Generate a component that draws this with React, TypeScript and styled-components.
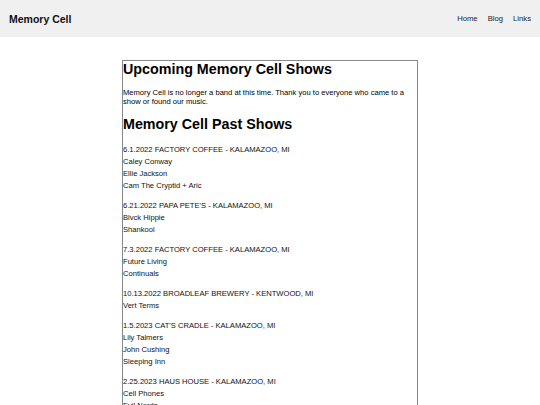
import React from 'react'
import styled, { createGlobalStyle } from 'styled-components'

interface Show {
    title: string
    acts: string[]
}

const shows: Show[] = [
    { title: '6.1.2022 FACTORY COFFEE - KALAMAZOO, MI', acts: ['Caley Conway', 'Ellie Jackson', 'Cam The Cryptid + Aric'] },
    { title: "6.21.2022 PAPA PETE'S - KALAMAZOO, MI", acts: ['Blvck Hippie', 'Shankool'] },
    { title: '7.3.2022 FACTORY COFFEE - KALAMAZOO, MI', acts: ['Future Living', 'Continuals'] },
    { title: '10.13.2022 BROADLEAF BREWERY - KENTWOOD, MI', acts: ['Vert Terms'] },
    { title: "1.5.2023 CAT'S CRADLE - KALAMAZOO, MI", acts: ['Lily Talmers', 'John Cushing', 'Sleeping Inn'] },
    { title: '2.25.2023 HAUS HOUSE - KALAMAZOO, MI', acts: ['Cell Phones', 'Evil Nerds'] },
]

const GlobalStyle = createGlobalStyle`
    body {
        margin: 0;
        background: #fff;
        color: #000;
        font-family: "Liberation Sans", Arial, sans-serif;
    }
`

const App: React.FC = () => {
    return (
        <>
            <GlobalStyle />
            <Header>
                <Brand>Memory Cell</Brand>
                <Nav>
                    <NavLink>Home</NavLink>
                    <NavLink>Blog</NavLink>
                    <NavLink>Links</NavLink>
                </Nav>
            </Header>
            <Content>
                <Title>Upcoming Memory Cell Shows</Title>
                <Text>Memory Cell is no longer a band at this time. Thank you to everyone who came to a show or found our music.</Text>
                <Title>Memory Cell Past Shows</Title>
                <ShowList>
                    {shows.map(show => (
                        <ShowBlock key={show.title}>
                            <Line>{show.title}</Line>
                            {show.acts.map(act => <Line key={act}>{act}</Line>)}
                        </ShowBlock>
                    ))}
                </ShowList>
            </Content>
        </>
    )
}

const Header = styled.header`
    display: flex;
    height: 37px;
    padding: 0 9px;
    justify-content: space-between;
    align-items: center;
    background: #f0f0f0;
`

const Brand = styled.div`
    font-size: 10.5px;
    font-weight: bold;
    color: #111;
`

const Nav = styled.nav`
    display: flex;
    gap: 10px;
`

const NavLink = styled.a`
    font-size: 7.7px;
    color: #222;
    text-decoration: none;
`

const Content = styled.main`
    width: 294px;
    margin: 23px auto 0;
    border: 1px solid #888;
`

const Title = styled.h1`
    margin: 0 0 10px;
    font-size: 14.3px;
    line-height: 17px;
    font-weight: bold;
`

const Text = styled.p`
    margin: 0 0 10px;
    font-size: 7.6px;
    line-height: 9px;
`

const ShowList = styled.div`
    padding-top: 1px;
`

const ShowBlock = styled.div`
    margin-bottom: 8px;
`

const Line = styled.div`
    font-size: 7.6px;
    line-height: 12px;
    color: #111;
`

export default App
